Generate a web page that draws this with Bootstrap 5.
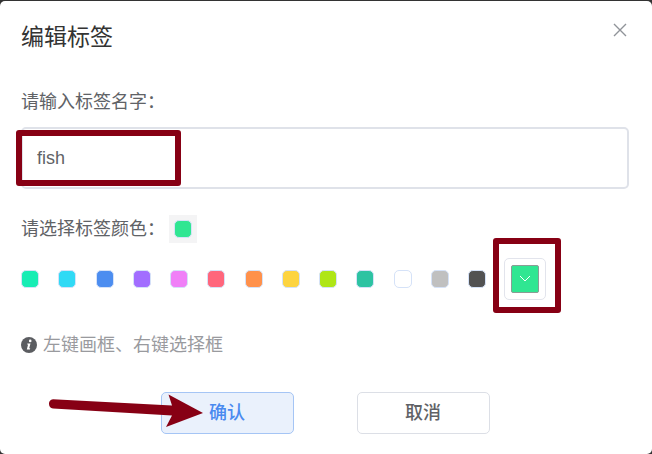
<!DOCTYPE html>
<html lang="zh-CN">
<head>
<meta charset="utf-8">
<meta name="viewport" content="width=device-width, initial-scale=1">
<title>编辑标签</title>
<link href="https://cdn.jsdelivr.net/npm/bootstrap@5.3.0/dist/css/bootstrap.min.css" rel="stylesheet">
<style>
  body { background: #333; font-family: "Liberation Sans", "Noto Sans CJK SC", sans-serif; font-size: 18px; line-height: 26px; color: #606266; }
  .tag-dialog { min-height: calc(100vh - 1px); margin-top: 1px; padding: 20px 23px 18px 21px; border-radius: 5px; }
  .dialog-title { font-size: 23px; line-height: 32px; font-weight: 400; color: #333; }
  .close-btn { padding: 2px; color: #909399; line-height: 0; }
  .name-block { margin-top: 36px; }
  .name-label { margin-bottom: 12px; }
  .name-input { height: 62px; padding: 0 14px; border: 2px solid #dfe2e9; border-radius: 5px; font-size: 18px; color: #606266; }
  .color-line { margin-top: 26px; height: 28px; }
  .current-color { width: 28px; height: 28px; background: #f4f4f5; }
  .swatch { width: 18px; height: 18px; padding: 0; border: 1px solid #d5e2f8; border-radius: 5px; background: var(--tone); }
  .swatch-row { margin-top: 15px; gap: 18px; }
  .swatch-list { flex: 0 1 465px; }
  .picker { width: 42px; height: 42px; padding: 6px; border: 1px solid #e2e4ec; border-radius: 5px; background: #fff; }
  .picker-fill { width: 28px; height: 28px; border: 1px solid #8b9c95; border-radius: 2px; background: #30e692; }
  .frame { border: 6px solid #870014; border-radius: 3px; pointer-events: none; }
  .frame-name { left: -5px; top: 3px; width: 165px; height: 56px; }
  .frame-picker { left: -11px; top: -20px; width: 68px; height: 75px; }
  .hint { margin-top: 32px; gap: 6px; color: #999a9e; }
  .actions { margin-top: 34px; gap: 63px; }
  .action-btn { width: 133px; height: 42px; padding: 0; font-size: 18px; font-weight: 500; border-radius: 5px; color: #606266; border: 1px solid #dcdfe6; background: #fff; }
  .action-confirm { color: #4a8af0; border-color: #a5c5f5; background: #eaf1fc; }
  .arrow { left: -114px; top: 0; pointer-events: none; }
</style>
<script src="https://cdn.jsdelivr.net/npm/bootstrap@5.3.0/dist/js/bootstrap.bundle.min.js"></script>
</head>
<body>
<main class="tag-dialog bg-white" role="dialog" aria-labelledby="dialog-title">
  <header class="d-flex justify-content-between align-items-start">
    <h1 class="dialog-title mb-0" id="dialog-title">编辑标签</h1>
    <button type="button" class="close-btn btn border-0" aria-label="关闭">
      <svg width="14" height="14" viewBox="0 0 14 14" fill="none" stroke="currentColor" stroke-width="1.4"><path d="M1 1l12 12M13 1L1 13"/></svg>
    </button>
  </header>
  <form>
    <div class="name-block">
      <label for="tag-name" class="name-label d-block">请输入标签名字：</label>
      <div class="position-relative">
        <input type="text" id="tag-name" class="name-input form-control" value="fish">
        <span class="frame frame-name position-absolute"></span>
      </div>
    </div>
    <div class="color-line d-flex align-items-center">
      <span class="me-1">请选择标签颜色：</span>
      <span class="current-color d-flex align-items-center justify-content-center"><span class="swatch" style="--tone:#30e692"></span></span>
    </div>
    <div class="swatch-row d-flex align-items-center">
      <div class="swatch-list d-flex justify-content-between">
        <button type="button" class="swatch" style="--tone:#17edb4" aria-label="青绿"></button>
        <button type="button" class="swatch" style="--tone:#30daf5" aria-label="天蓝"></button>
        <button type="button" class="swatch" style="--tone:#4c8df0" aria-label="蓝"></button>
        <button type="button" class="swatch" style="--tone:#a26dff" aria-label="紫"></button>
        <button type="button" class="swatch" style="--tone:#f07ff7" aria-label="粉"></button>
        <button type="button" class="swatch" style="--tone:#ff667c" aria-label="红"></button>
        <button type="button" class="swatch" style="--tone:#ff914b" aria-label="橙"></button>
        <button type="button" class="swatch" style="--tone:#fdd440" aria-label="黄"></button>
        <button type="button" class="swatch" style="--tone:#afe616" aria-label="黄绿"></button>
        <button type="button" class="swatch" style="--tone:#2dc3a2" aria-label="墨绿"></button>
        <button type="button" class="swatch" style="--tone:#ffffff" aria-label="白"></button>
        <button type="button" class="swatch" style="--tone:#c0c0c0" aria-label="灰"></button>
        <button type="button" class="swatch" style="--tone:#525252" aria-label="深灰"></button>
      </div>
      <div class="position-relative">
        <button type="button" class="picker d-block" aria-label="自定义颜色">
          <span class="picker-fill d-flex align-items-center justify-content-center">
            <svg width="12" height="8" viewBox="0 0 12 8" fill="none" stroke="#fff" stroke-width="1"><path d="M1 1l5 5 5-5"/></svg>
          </span>
        </button>
        <span class="frame frame-picker position-absolute"></span>
      </div>
    </div>
    <p class="hint d-flex align-items-center mb-0">
      <svg width="16" height="16" viewBox="0 0 16 16" aria-hidden="true"><circle cx="8" cy="8" r="8" fill="#5b5d61"/><circle cx="9.2" cy="3.9" r="1.3" fill="#fff"/><path d="M6.4 6.4h3.1L8.2 11.3h1l-.3 1.1H5.8l1.3-4.9h-1z" fill="#fff"/></svg>
      <span>左键画框、右键选择框</span>
    </p>
    <div class="actions d-flex justify-content-center">
      <div class="position-relative">
        <button type="submit" class="action-btn action-confirm btn">确认</button>
        <svg class="arrow position-absolute" width="156" height="40" viewBox="0 0 156 40" aria-hidden="true"><path d="M6 7.200L125 13.500 121.500 2.500 156 21 119 35 125 23.500 6 16.500A4.700 4.700 0 0 1 6 7.200z" fill="#870014"/></svg>
      </div>
      <button type="button" class="action-btn btn">取消</button>
    </div>
  </form>
</main>
</body>
</html>
